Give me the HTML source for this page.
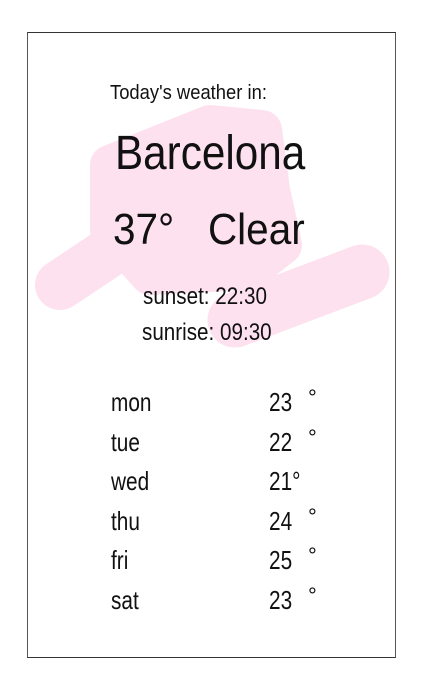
<!DOCTYPE html>
<html><head><meta charset="utf-8"><style>
html,body{margin:0;padding:0;background:#fff;width:423px;height:689px;overflow:hidden}
body{position:relative;font-family:"Liberation Sans",sans-serif;color:#111}
.box{position:absolute;left:27px;top:32px;width:367px;height:624px;border:1px solid #555;border-top-color:#333;border-bottom-color:#333}
.t{position:absolute;white-space:nowrap;font-weight:normal;transform-origin:left top}
</style></head><body>
<div class="box"></div>
<svg width="423" height="689" style="position:absolute;left:0;top:0">
<g stroke="#fde1ee" fill="#fde1ee" stroke-linecap="round" stroke-linejoin="round">
<path d="M110 165 L210 125 L262 130 L270 190 L282 245 L250 270 L150 275 L110 230 Z" stroke-width="40"/>
<path d="M60 285 L150 225" stroke-width="50" fill="none"/>
<path d="M235 320 L362 272" stroke-width="55" fill="none"/>
</g>
</svg>
<div class="t" style="left:110px;top:82px;font-size:20px;transform:scaleX(0.92)">Today's weather in:</div>
<div class="t" style="left:115px;top:126px;font-size:48px;transform:scaleX(0.88)">Barcelona</div>
<div class="t" style="left:113px;top:205px;font-size:44px;transform:scaleX(0.92)">37°&nbsp;&nbsp; Clear</div>
<div class="t" style="left:143px;top:283px;font-size:24px;transform:scaleX(0.86)">sunset: 22:30</div>
<div class="t" style="left:142px;top:319px;font-size:24px;transform:scaleX(0.86)">sunrise: 09:30</div>
<div class="t" style="left:111px;top:383px;font-size:26px;line-height:39.5px;transform:scaleX(0.8)">mon<br>tue<br>wed<br>thu<br>fri<br>sat</div>
<div class="t" style="left:269px;top:383px;font-size:26px;line-height:39.5px;transform:scaleX(0.8)">23<br>22<br>21°<br>24<br>25<br>23</div>
<div class="t" style="left:308px;top:378px;font-size:22px;line-height:39.5px">°<br>°<br><br>°<br>°<br>°</div>
</body></html>
